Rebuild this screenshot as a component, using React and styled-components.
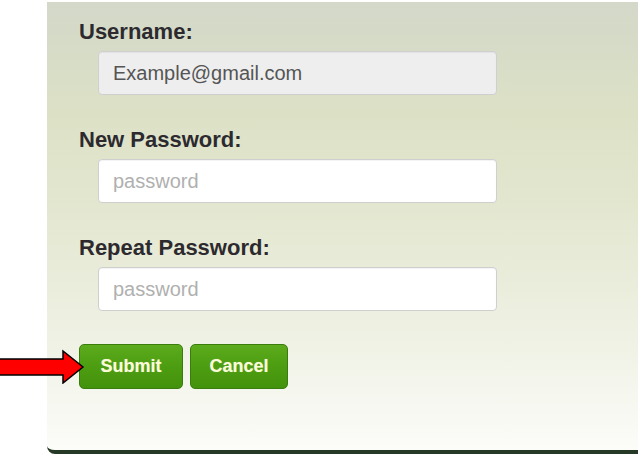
import React from "react";
import styled, { createGlobalStyle } from "styled-components";

const GlobalStyle = createGlobalStyle`
    html, body {
        margin: 0;
        padding: 0;
        background: #ffffff;
        font-family: "Liberation Sans", Arial, sans-serif;
    }
`;

const Panel = styled.div`
    position: relative;
    box-sizing: border-box;
    margin: 2px 0 0 47px;
    width: 591px;
    height: 452px;
    padding: 17px 0 0 32px;
    display: flex;
    flex-direction: column;
    background: linear-gradient(to bottom, #d3d8c9 0%, #dce1c6 25%, #e5e8d2 50%, #eff1e4 75%, #fcfcf9 100%);
    border-bottom: 4px solid #263826;
    border-bottom-left-radius: 8px;
`;

const Field = styled.div`
    display: flex;
    flex-direction: column;
    margin-bottom: 32px;
`;

const Label = styled.label`
    font-size: 22px;
    line-height: 26px;
    font-weight: bold;
    color: #2c2a2f;
    margin-bottom: 6px;
`;

const Input = styled.input`
    box-sizing: border-box;
    margin-left: 19px;
    width: 399px;
    height: 44px;
    padding: 0 14px;
    border: 1px solid #cfcfcf;
    border-radius: 4px;
    box-shadow: inset 0 1px 1px rgba(0,0,0,.05);
    background: ${p => p.disabled ? "#eeeeee" : "#ffffff"};
    color: #555555;
    font-family: "Liberation Sans", Arial, sans-serif;
    font-size: 20px;
    outline: none;

    &::placeholder{
        color: #b0b0b0;
    }
`;

const Botonera = styled.div`
    position: relative;
    display: flex;
    gap: 7px;
    margin-top: 1px;
`;

const Boton = styled.button`
    box-sizing: border-box;
    height: 45px;
    width: ${p => p.w}px;
    padding: 0;
    border: 1px solid #3a7d0c;
    border-radius: 5px;
    background: linear-gradient(to bottom, #5cab1c 0%, #4d9d12 50%, #43920b 100%);
    color: #fbfbdc;
    font-family: "Liberation Sans", Arial, sans-serif;
    font-size: 18px;
    font-weight: bold;
    text-shadow: 0 0 1px rgba(255,255,200,.4);
    cursor: pointer;
`;

const Flecha = styled.svg`
    position: absolute;
    left: -79px;
    top: 5px;
    width: 85px;
    height: 35px;
`;

const App = () =>{
    return(
        <>
        <GlobalStyle/>
        <Panel>
            <Field>
                <Label>Username:</Label>
                <Input type='text' value='Example@gmail.com' disabled readOnly/>
            </Field>
            <Field>
                <Label>New Password:</Label>
                <Input type='password' placeholder='password'/>
            </Field>
            <Field>
                <Label>Repeat Password:</Label>
                <Input type='password' placeholder='password'/>
            </Field>
            <Botonera>
                <Flecha viewBox="0 0 85 35">
                    <polygon points="-2,10 63,10 63,2 83,18 63,34 63,26 -2,26" fill="#ff0000" stroke="#000" strokeWidth="1.5" strokeLinejoin="miter"/>
                </Flecha>
                <Boton w={104}>Submit</Boton>
                <Boton w={98}>Cancel</Boton>
            </Botonera>
        </Panel>
        </>
    );
};

export default App;
